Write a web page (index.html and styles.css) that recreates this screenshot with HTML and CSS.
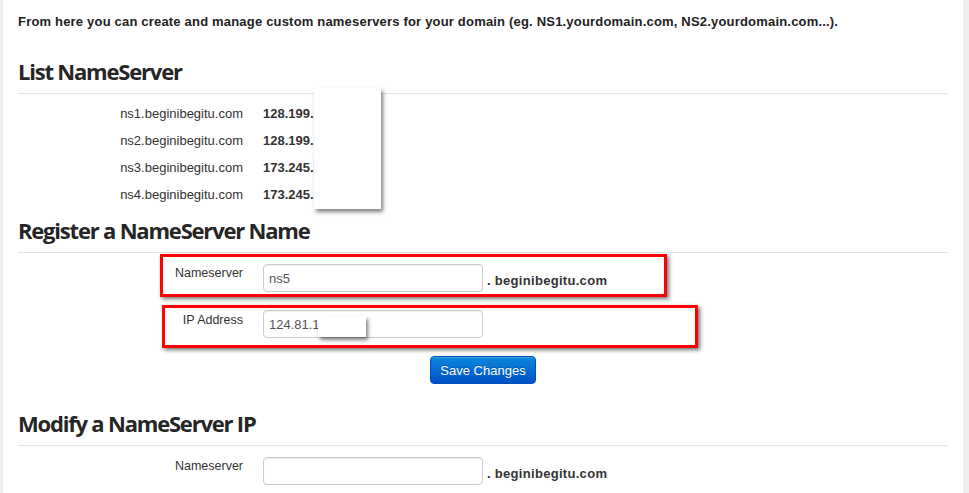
FILE: index.html
```html
<!DOCTYPE html>
<html lang="en">
<head>
    <meta charset="UTF-8">
    <title>Manage Private Nameservers</title>
    <link rel="stylesheet" href="styles.css">
</head>
<body>
    <div class="page">
        <p class="intro">From here you can create and manage custom nameservers for your domain (eg. NS1.yourdomain.com, NS2.yourdomain.com...).</p>

        <section class="block list-block">
            <h2 class="block-title">List NameServer</h2>
            <div class="ns-list">
                <div class="ns-row"><span class="ns-name">ns1.beginibegitu.com</span><span class="ns-ip">128.199.2</span></div>
                <div class="ns-row"><span class="ns-name">ns2.beginibegitu.com</span><span class="ns-ip">128.199.2</span></div>
                <div class="ns-row"><span class="ns-name">ns3.beginibegitu.com</span><span class="ns-ip">173.245.5</span></div>
                <div class="ns-row"><span class="ns-name">ns4.beginibegitu.com</span><span class="ns-ip">173.245.5</span></div>
            </div>
            <div class="mask mask-list"></div>
        </section>

        <section class="block register-block">
            <h2 class="block-title">Register a NameServer Name</h2>
            <form class="ns-form">
                <div class="form-row">
                    <label class="form-label">Nameserver</label>
                    <input class="form-input" type="text" value="ns5">
                    <span class="suffix">. beginibegitu.com</span>
                </div>
                <div class="form-row">
                    <label class="form-label label-ip">IP Address</label>
                    <input class="form-input" type="text" value="124.81.1">
                </div>
                <div class="form-actions">
                    <button class="btn-primary" type="button">Save Changes</button>
                </div>
            </form>
            <!-- annotation boxes from the screenshot -->
            <div class="mark mark-one"></div>
            <div class="mark mark-two"></div>
            <div class="mask mask-ip"></div>
        </section>

        <section class="block modify-block">
            <h2 class="block-title">Modify a NameServer IP</h2>
            <form class="ns-form">
                <div class="form-row">
                    <label class="form-label">Nameserver</label>
                    <input class="form-input" type="text" value="">
                    <span class="suffix">. beginibegitu.com</span>
                </div>
            </form>
        </section>
    </div>
</body>
</html>
```

FILE: styles.css
```css
:root {
    --text-color: #333;
    --rule-color: #e2e2e2;
    --mark-color: #ff0000;
}

html, body {
    height: 100%;
}

body {
    margin: 0;
    background-color: #eeeeee;
    font-family: "Liberation Sans", Arial, sans-serif;
    font-size: 13px;
    color: var(--text-color);
    overflow: hidden;
}

.page {
    position: relative;
    margin-left: 3px;
    width: 930px;
    min-height: 100%;
    padding: 0 15px;
    background-color: #fff;
}

.intro {
    margin: 0;
    padding-top: 12px;
    line-height: 20px;
    font-weight: bold;
    letter-spacing: 0.19px;
    color: #222;
}

.block {
    position: relative;
}

.block-title {
    margin: 0;
    padding-bottom: 7px;
    border-bottom: 1px solid var(--rule-color);
    font-family: "Open Sans", sans-serif;
    font-size: 22px;
    font-weight: 700;
    line-height: 30px;
    letter-spacing: -1.2px;
    color: #262626;
}

.list-block {
    margin-top: 24px;
}

.ns-list {
    padding-top: 6px;
}

.ns-row {
    display: flex;
    height: 27px;
    align-items: center;
}

.ns-name {
    width: 225px;
    text-align: right;
}

.ns-ip {
    margin-left: 20px;
    font-weight: bold;
}

.register-block {
    margin-top: 7px;
}

.modify-block {
    margin-top: 24px;
}

.ns-form {
    padding-top: 11px;
}

.form-row {
    display: flex;
    align-items: flex-start;
    margin-bottom: 18px;
}

.form-label {
    width: 225px;
    text-align: right;
    font-size: 12.5px;
    line-height: 18px;
}

.label-ip {
    padding-top: 1px;
}

.form-input {
    box-sizing: border-box;
    width: 220px;
    height: 28px;
    margin: 0 0 0 20px;
    padding: 4px 5px;
    border: 1px solid #cccccc;
    border-radius: 4px;
    box-shadow: inset 0 1px 1px rgba(0,0,0,0.075);
    font-family: inherit;
    font-size: 13px;
    color: #555;
}

.suffix {
    margin-left: 4px;
    padding-top: 8px;
    line-height: 18px;
    font-weight: bold;
    letter-spacing: 0.3px;
}

.form-actions {
    text-align: center;
}

.btn-primary {
    width: 106px;
    height: 28px;
    padding: 0;
    border: 1px solid #0050b8;
    border-radius: 4px;
    background-image: linear-gradient(to bottom, #0a88dc, #0051c6);
    color: #fff;
    font-family: inherit;
    font-size: 13px;
    text-shadow: 0 -1px 0 rgba(0,0,0,0.25);
    box-shadow: inset 0 1px 0 rgba(255,255,255,0.2);
}

.mark {
    position: absolute;
    border: 3px solid var(--mark-color);
    box-shadow: 2px 2px 4px rgba(0,0,0,0.55);
}

.mark-one {
    left: 142px;
    top: 39px;
    width: 501px;
    height: 37px;
}

.mark-two {
    left: 144px;
    top: 90px;
    width: 530px;
    height: 37px;
}

.mask {
    position: absolute;
    background-color: #fff;
    box-shadow: 2px 3px 4px rgba(0,0,0,0.5);
}

.mask-list {
    left: 296px;
    top: 32px;
    width: 67px;
    height: 121px;
}

.mask-ip {
    left: 300px;
    top: 101px;
    width: 48px;
    height: 21px;
}
```
